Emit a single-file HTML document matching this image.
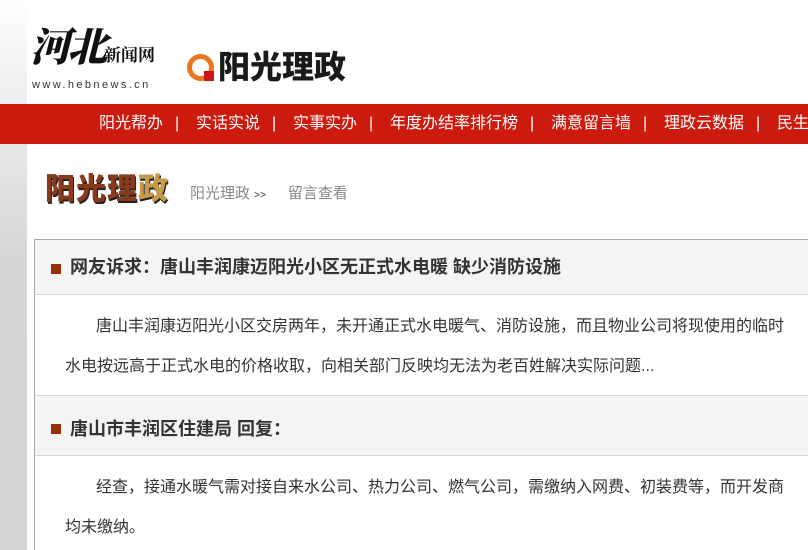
<!DOCTYPE html>
<html><head><meta charset="utf-8">
<style>
*{margin:0;padding:0;box-sizing:border-box}
html,body{width:808px;height:550px;overflow:hidden}
body{background:#fff;font-family:"Liberation Sans","Microsoft YaHei","Noto Sans CJK SC",sans-serif;position:relative}
.side{position:absolute;left:0;top:0;width:27px;height:550px;background:linear-gradient(#fff 0,#f4f4f4 60px,#d6d6d6 260px,#d4d4d4 100%)}
.nav{position:absolute;left:0;top:104px;width:808px;height:40px;background:#cd1a0e;color:#fff;font-size:16px;line-height:40px;white-space:nowrap}
.nav span{position:absolute;top:0}
.logo1{position:absolute;left:30px;top:24px}
.box{position:absolute;left:34px;top:239px;width:800px;height:330px;border:1px solid #aaa;border-right:none}
.hd{height:55px;background:#f4f4f4;border-bottom:1px solid #d4d4d4;position:relative;font-weight:bold;font-size:18px;color:#333;line-height:55px;padding-left:35px}
.hd i{position:absolute;left:16px;top:24px;width:10px;height:10px;background:#9a3306}
.bd{font-size:16px;color:#333;line-height:40px;padding:12px 12px 0 30px;text-indent:31px;border-bottom:1px solid #d4d4d4}
</style></head><body>
<div class="side"></div>
<div class="logo1">
<div style="font-family:'Noto Serif CJK SC',serif;font-size:40px;font-weight:900;color:#111;line-height:42px;letter-spacing:-3px;font-style:italic">河北<span style="font-size:17px;font-style:normal;letter-spacing:0;font-weight:bold">新闻网</span></div>
<div style="font-size:11px;color:#333;letter-spacing:2.4px;margin-top:4px;margin-left:2px">www.hebnews.cn</div>
</div>
<div style="position:absolute;left:187px;top:54px;width:27px;height:27px;border:5px solid #e8771d;border-radius:50%;"></div>
<div style="position:absolute;left:204px;top:71px;width:10px;height:10px;background:#c8161d"></div>
<div style="position:absolute;left:218px;top:46px;font-size:32px;font-weight:900;color:#1a1a1a;line-height:42px;letter-spacing:0">阳光理政</div>
<div class="nav">
<span style="left:99px">阳光帮办</span><span style="left:175px">|</span>
<span style="left:196px">实话实说</span><span style="left:272px">|</span>
<span style="left:293px">实事实办</span><span style="left:369px">|</span>
<span style="left:390px">年度办结率排行榜</span><span style="left:530px">|</span>
<span style="left:551px">满意留言墙</span><span style="left:643px">|</span>
<span style="left:664px">理政云数据</span><span style="left:756px">|</span>
<span style="left:777px">民生</span>
</div>
<div style="position:absolute;left:45px;top:171px;font-size:30px;font-weight:900;color:#8a3a1c;line-height:38px;text-shadow:1px 2px 0 #222;letter-spacing:1px">阳光理<span style="color:#c79a4a">政</span></div>
<div style="position:absolute;left:190px;top:184px;font-size:15px;color:#888;line-height:20px">阳光理政 <span style="font-size:10px;color:#333">&gt;&gt;</span><span style="margin-left:22px">留言查看</span></div>
<div class="box">
<div class="hd"><i></i>网友诉求：唐山丰润康迈阳光小区无正式水电暖 缺少消防设施</div>
<div class="bd" style="height:101px;width:774px">唐山丰润康迈阳光小区交房两年，未开通正式水电暖气、消防设施，而且物业公司将现使用的临时水电按远高于正式水电的价格收取，向相关部门反映均无法为老百姓解决实际问题...</div>
<div class="hd" style="height:60px;line-height:66px"><i style="top:28px"></i>唐山市丰润区住建局 回复：</div>
<div class="bd" style="border:none;width:774px">经查，接通水暖气需对接自来水公司、热力公司、燃气公司，需缴纳入网费、初装费等，而开发商均未缴纳。</div>
</div>
</body></html>
